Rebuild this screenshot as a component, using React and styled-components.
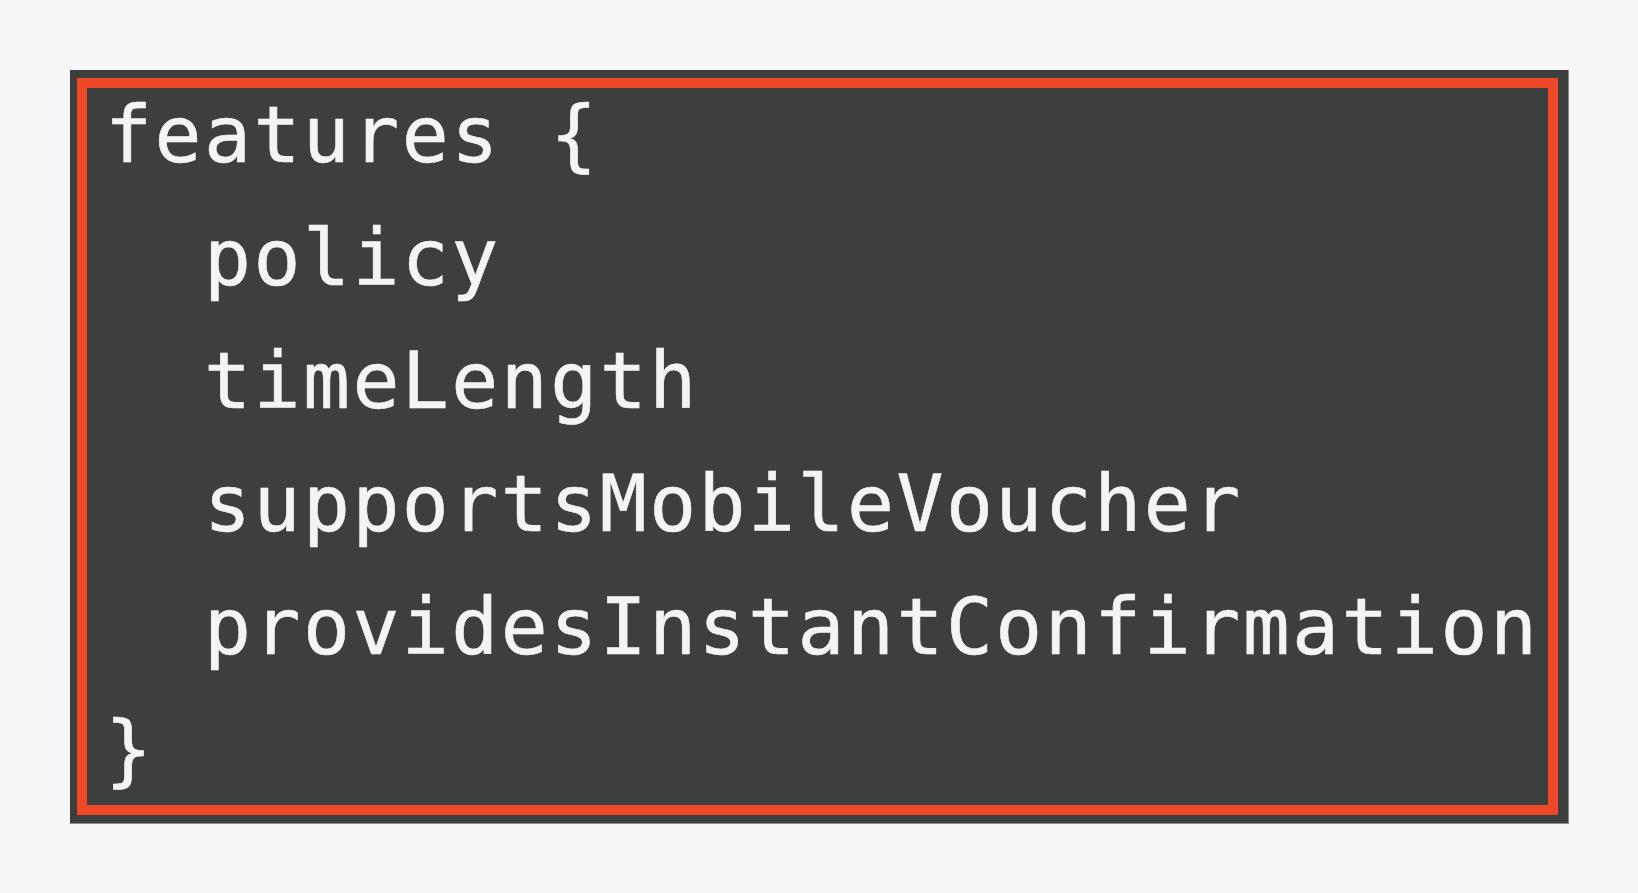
import React from "react";
import styled, { createGlobalStyle } from "styled-components";

const Global = createGlobalStyle`
  html, body {
    margin: 0;
    padding: 0;
    background: #f5f6f8;
  }
`;

const Page = styled.div`
  width: 1638px;
  height: 893px;
  padding: 70px 0 0 70px;
  box-sizing: border-box;
  background: #f5f6f8;
`;

const Frame = styled.div`
  width: 1499px;
  height: 754px;
  box-sizing: border-box;
  padding: 8px 11px 9px 7px;
  background: #3d3e3e;
  box-shadow: inset -1px -1px 0 #8a8b8c;
`;

const CodeBox = styled.div`
  height: 100%;
  box-sizing: border-box;
  border: 10px solid #ee4828;
  padding: 1px 0 0 18px;
  display: flex;
  flex-direction: column;
  gap: 31px;
  font-family: "DejaVu Sans Mono", "Liberation Mono", monospace;
  font-size: 78px;
  letter-spacing: 2.5px;
  color: #f4f4f4;
  -webkit-text-stroke: 0.6px #f4f4f4;
  overflow: hidden;
`;

const Line = styled.div`
  line-height: 92px;
  white-space: pre;
  padding-left: ${(p) => (p.indent ? p.indent * 49.5 : 0)}px;
`;

const lines = [
  { text: "features {", indent: 0 },
  { text: "policy", indent: 2 },
  { text: "timeLength", indent: 2 },
  { text: "supportsMobileVoucher", indent: 2 },
  { text: "providesInstantConfirmation", indent: 2 },
  { text: "}", indent: 0 },
];

export default function App() {
  return (
    <Page>
      <Global />
      <Frame>
        <CodeBox>
          {lines.map((l, i) => (
            <Line key={i} indent={l.indent}>
              {l.text}
            </Line>
          ))}
        </CodeBox>
      </Frame>
    </Page>
  );
}
